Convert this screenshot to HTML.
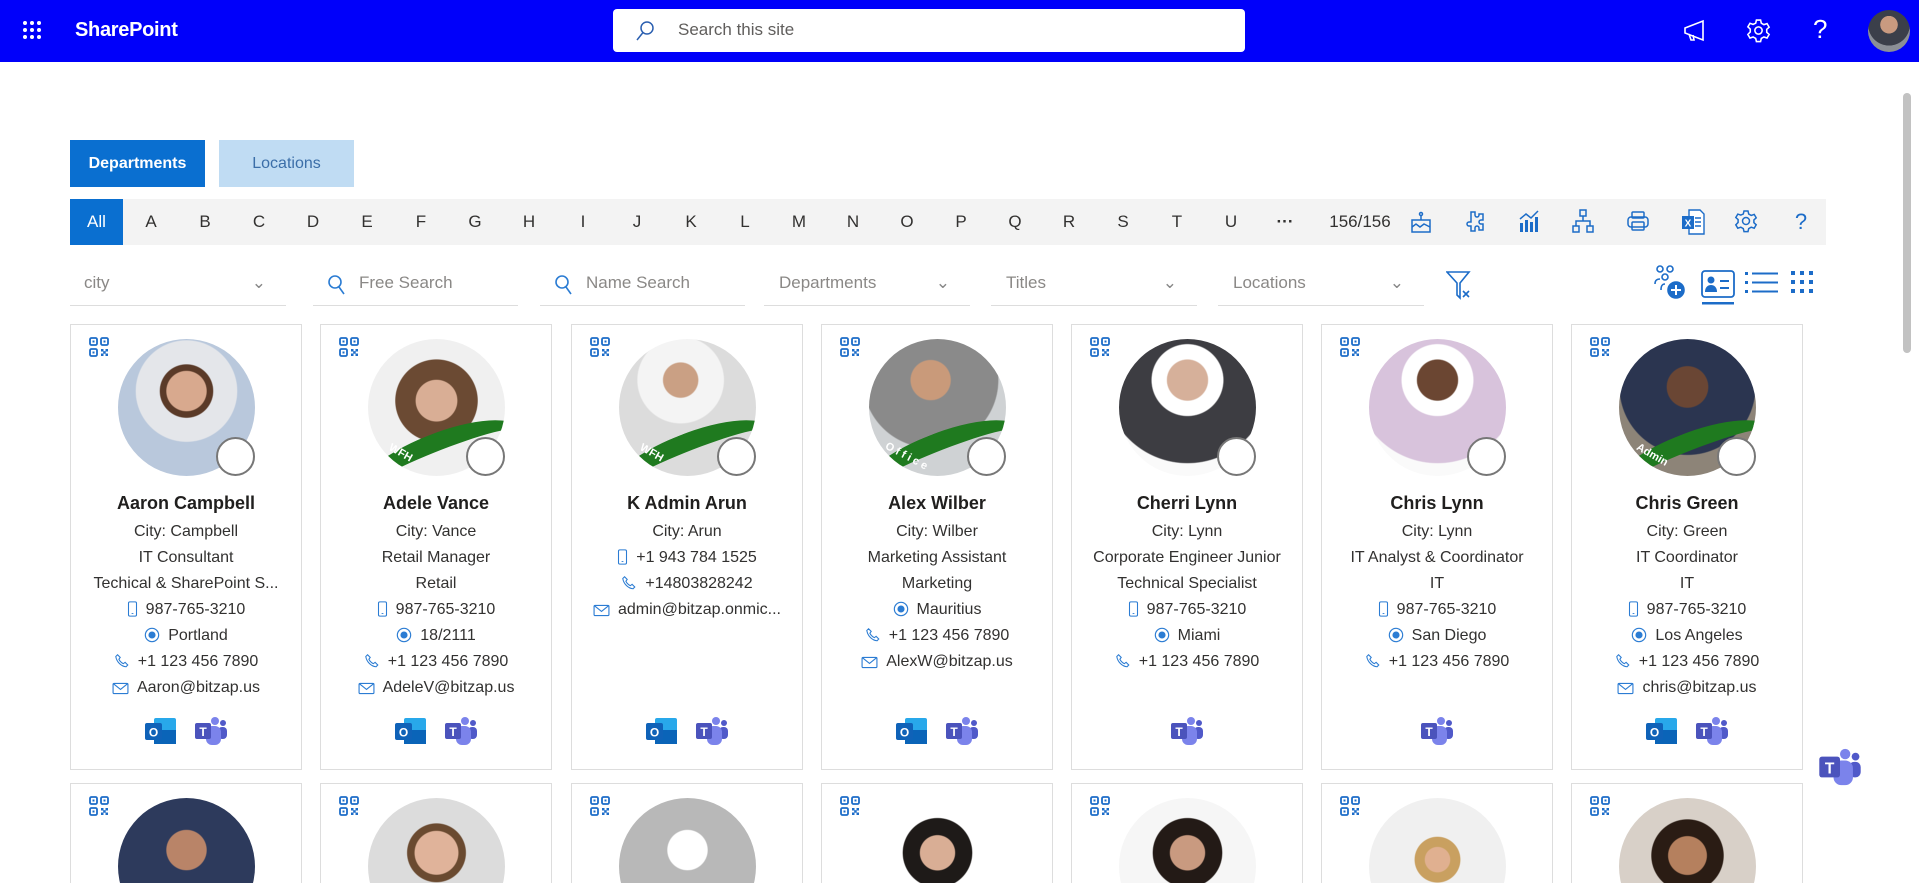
<!DOCTYPE html>
<html><head><meta charset="utf-8"><style>
*{box-sizing:border-box;margin:0;padding:0}
html{height:883px;overflow:hidden}
body{width:1919px;height:883px;overflow:hidden;background:#fff;font-family:"Liberation Sans",sans-serif;color:#323130;position:relative}
.hdr{position:absolute;left:0;top:0;width:1919px;height:62px;background:#0000fa}
.abs{position:absolute}
.search{left:613px;top:9px;width:632px;height:43px;background:#fff;border-radius:4px}
.tab{top:140px;height:47px;font-size:16px;line-height:47px;text-align:center}
.alpha{left:70px;top:199px;width:1756px;height:46px;background:#f3f3f3}
.alpha span{position:absolute;top:0;line-height:46px;font-size:17px;color:#323130;width:30px;text-align:center}
.flt{top:268px;height:38px;border-bottom:1px solid #ddd;font-size:17px;color:#8a8886;line-height:30px}
.card{position:absolute;top:324px;width:232px;height:446px;border:1px solid #ddd;text-align:center;font-size:16px}
.card.r2{top:783px;height:100px;overflow:hidden;border-bottom:none}
.ph{position:absolute;left:47px;top:14px;width:137px;height:137px;border-radius:50%;overflow:hidden;background:#e8e8e8}
.st{position:absolute;left:145px;top:112px;width:39px;height:39px;border-radius:50%;border:2.5px solid #777;background:#fff}
.qr{position:absolute;left:18px;top:12px}
.nm{position:absolute;left:0;right:0;top:166px;font-weight:bold;font-size:18px;line-height:24px;color:#201f1e}
.ln{position:absolute;left:0;right:0;top:194px}
.ln div{height:26px;line-height:26px;white-space:nowrap}
.ln svg{vertical-align:-3px;margin-right:8px}
.apps{position:absolute;left:0;right:0;top:391px;text-align:center}
.apps svg{margin:0 8px}
</style></head><body>
<svg width="0" height="0" style="position:absolute">
<defs>
<symbol id="qr" viewBox="0 0 20 20"><g fill="none" stroke="#1c6cc8" stroke-width="1.8"><rect x="1" y="1" width="7" height="7" rx="1.5"/><rect x="12" y="1" width="7" height="7" rx="1.5"/><rect x="1" y="12" width="7" height="7" rx="1.5"/></g><g fill="#1c6cc8"><rect x="3.5" y="3.5" width="2" height="2"/><rect x="14.5" y="3.5" width="2" height="2"/><rect x="3.5" y="14.5" width="2" height="2"/><rect x="12" y="12" width="2.5" height="2.5"/><rect x="16.5" y="12" width="2.5" height="2.5"/><rect x="14.2" y="14.2" width="2.5" height="2.5"/><rect x="12" y="16.5" width="2.5" height="2.5"/><rect x="16.5" y="16.5" width="2.5" height="2.5"/></g></symbol>
<symbol id="mob" viewBox="0 0 12 18"><rect x="1.5" y="1" width="9" height="16" rx="1.5" fill="none" stroke="#2b7cd3" stroke-width="1.2"/><line x1="5" y1="14" x2="7" y2="14" stroke="#2b7cd3"/></symbol>
<symbol id="loc" viewBox="0 0 18 18"><circle cx="9" cy="9" r="7.5" fill="none" stroke="#2b7cd3" stroke-width="1.3"/><circle cx="9" cy="9" r="4" fill="#2b7cd3"/></symbol>
<symbol id="tel" viewBox="0 0 18 18"><path d="M4 2l3 3-1.5 2c1 2 3 4 5 5l2-1.5 3 3-2 2C8 15 3 10 2 4z" fill="none" stroke="#2b7cd3" stroke-width="1.2"/></symbol>
<symbol id="mail" viewBox="0 0 18 14"><rect x="1" y="1.5" width="16" height="11" rx="1" fill="none" stroke="#2b7cd3" stroke-width="1.2"/><path d="M1.5 2l7.5 6 7.5-6" fill="none" stroke="#2b7cd3" stroke-width="1.2"/></symbol>
<symbol id="ol" viewBox="0 0 34 30"><rect x="10" y="2" width="22" height="26" rx="2" fill="#28a8ea"/><rect x="10" y="14" width="22" height="14" fill="#0a64b8"/><rect x="1" y="7" width="17" height="17" rx="2" fill="#0f62b8"/><text x="9.5" y="20.5" font-size="12" font-weight="bold" fill="#fff" text-anchor="middle" font-family="Liberation Sans">O</text></symbol>
<symbol id="tm" viewBox="0 0 34 30"><circle cx="21" cy="5" r="4" fill="#7b83eb"/><circle cx="29" cy="7" r="3" fill="#5059c9"/><rect x="24" y="11" width="9" height="12" rx="4" fill="#5059c9"/><rect x="12" y="10" width="15" height="19" rx="6" fill="#7b83eb"/><rect x="1" y="7" width="16" height="16" rx="2" fill="#4b53bc"/><text x="9" y="20" font-size="12" font-weight="bold" fill="#fff" text-anchor="middle" font-family="Liberation Sans">T</text></symbol>
</defs></svg>

<div class="hdr">
 <svg class="abs" style="left:22px;top:20px" width="20" height="20" viewBox="0 0 20 20" fill="#fff"><circle cx="3" cy="3" r="2"/><circle cx="10" cy="3" r="2"/><circle cx="17" cy="3" r="2"/><circle cx="3" cy="10" r="2"/><circle cx="10" cy="10" r="2"/><circle cx="17" cy="10" r="2"/><circle cx="3" cy="17" r="2"/><circle cx="10" cy="17" r="2"/><circle cx="17" cy="17" r="2"/></svg>
 <div class="abs" style="left:75px;top:19px;color:#fff;font-size:20px;font-weight:bold;letter-spacing:-0.3px">SharePoint</div>
 <div class="abs search"><svg class="abs" style="left:22px;top:11px" width="20" height="22" viewBox="0 0 20 22"><circle cx="12" cy="8" r="6" fill="none" stroke="#2b5fb0" stroke-width="1.5"/><line x1="8" y1="12.5" x2="2" y2="20" stroke="#2b5fb0" stroke-width="1.5"/></svg><div class="abs" style="left:65px;top:11px;font-size:17px;color:#605e5c">Search this site</div></div>
 <svg class="abs" style="left:1682px;top:19px" width="26" height="24" viewBox="0 0 26 24" fill="none" stroke="#fff" stroke-width="1.6"><path d="M3 9l18-7v19L3 14z"/><path d="M7 15l2 6h3l-1-5"/></svg>
 <svg class="abs" style="left:1746px;top:18px" width="25" height="25" viewBox="0 0 24 24" fill="none" stroke="#fff" stroke-width="1.5"><circle cx="12" cy="12" r="3.5"/><path d="M10 2h4l.7 3 2.5 1.4 3-1 2 3.4-2.3 2.1v2.8l2.3 2.1-2 3.4-3-1-2.5 1.4-.7 3h-4l-.7-3-2.5-1.4-3 1-2-3.4L4.1 13.4v-2.8L1.8 8.5l2-3.4 3 1L9.3 5z"/></svg>
 <div class="abs" style="left:1813px;top:14px;color:#fff;font-size:26px">?</div>
 <div class="abs" style="left:1868px;top:10px;width:42px;height:42px;border-radius:50%;background:radial-gradient(circle at 50% 35%,#c99a80 0 25%,#3b3f4a 26% 60%,#8b8f96 61%)"></div>
</div>

<div class="abs tab" style="left:70px;width:135px;background:#0a6fd0;color:#fff;font-weight:bold;font-size:16px">Departments</div>
<div class="abs tab" style="left:219px;width:135px;background:#c0dcf3;color:#3b6ea8">Locations</div>

<div class="abs alpha">
 <span style="left:0;width:53px;background:#0a6fd0;color:#fff">All</span>
 <span style="left:66px">A</span><span style="left:120px">B</span><span style="left:174px">C</span><span style="left:228px">D</span><span style="left:282px">E</span><span style="left:336px">F</span><span style="left:390px">G</span><span style="left:444px">H</span><span style="left:498px">I</span><span style="left:552px">J</span><span style="left:606px">K</span><span style="left:660px">L</span><span style="left:714px">M</span><span style="left:768px">N</span><span style="left:822px">O</span><span style="left:876px">P</span><span style="left:930px">Q</span><span style="left:984px">R</span><span style="left:1038px">S</span><span style="left:1092px">T</span><span style="left:1146px">U</span><span style="left:1200px;font-weight:bold">···</span>
 <span style="left:1250px;width:80px">156/156</span>
 <svg class="abs" style="left:1340px;top:12px" width="22" height="22" viewBox="0 0 22 22" fill="none" stroke="#1c6cc8" stroke-width="1.5"><rect x="2" y="9" width="18" height="12"/><path d="M2 16l4-3 4 3 4-3 6 3M11 9V5"/><circle cx="11" cy="3" r="1.5"/></svg>
 <svg class="abs" style="left:1394px;top:11px" width="22" height="24" viewBox="0 0 22 24" fill="none" stroke="#1c6cc8" stroke-width="1.5"><path d="M7 2h4v3a2 2 0 004 0V4h4v6h-2a2 2 0 000 4h2v6h-4v-2a2 2 0 00-4 0v3H7v-5H5a2 2 0 010-4h2z"/></svg>
 <svg class="abs" style="left:1447px;top:10px" width="24" height="24" viewBox="0 0 24 24" fill="#1c6cc8"><rect x="3" y="14" width="3" height="9"/><rect x="8" y="11" width="3" height="12"/><rect x="13" y="13" width="3" height="10"/><rect x="18" y="8" width="3" height="15"/><path d="M3 10l6-5 5 4 7-7" fill="none" stroke="#1c6cc8" stroke-width="1.5"/></svg>
 <svg class="abs" style="left:1502px;top:10px" width="22" height="24" viewBox="0 0 22 24" fill="none" stroke="#1c6cc8" stroke-width="1.5"><rect x="8" y="1" width="6" height="6"/><rect x="1" y="17" width="6" height="6"/><rect x="15" y="17" width="6" height="6"/><path d="M11 7v5M4 17v-5h14v5"/></svg>
 <svg class="abs" style="left:1556px;top:11px" width="24" height="22" viewBox="0 0 24 22" fill="none" stroke="#1c6cc8" stroke-width="1.5"><rect x="2" y="7" width="20" height="10" rx="3"/><rect x="6" y="2" width="12" height="6" rx="1"/><rect x="6" y="12" width="12" height="8" rx="1"/></svg>
 <svg class="abs" style="left:1611px;top:10px" width="24" height="26" viewBox="0 0 24 26"><path d="M8 1h11l4 4v20H8z" fill="#fff" stroke="#1c6cc8" stroke-width="1.4"/><path d="M14 9h6M14 13h6M14 17h6" stroke="#1c6cc8" stroke-width="1.4"/><rect x="1" y="7" width="12" height="13" fill="#1c6cc8"/><text x="7" y="17.5" font-size="10" fill="#fff" text-anchor="middle" font-family="Liberation Sans" font-weight="bold">X</text></svg>
 <svg class="abs" style="left:1664px;top:10px" width="24" height="24" viewBox="0 0 24 24" fill="none" stroke="#1c6cc8" stroke-width="1.5"><circle cx="12" cy="12" r="3.5"/><path d="M10 2h4l.7 3 2.5 1.4 3-1 2 3.4-2.3 2.1v2.8l2.3 2.1-2 3.4-3-1-2.5 1.4-.7 3h-4l-.7-3-2.5-1.4-3 1-2-3.4L4.1 13.4v-2.8L1.8 8.5l2-3.4 3 1L9.3 5z"/></svg>
 <span style="left:1716px;color:#1c6cc8;font-size:22px">?</span>
</div>

<div class="abs flt" style="left:70px;width:216px;padding-left:14px">city<span class="abs" style="right:20px;top:0;color:#888">&#8964;</span></div>
<div class="abs flt" style="left:313px;width:205px;padding-left:46px"><svg class="abs" style="left:14px;top:6px" width="20" height="22" viewBox="0 0 20 22" fill="none" stroke="#2b7cd3" stroke-width="1.6"><circle cx="8" cy="8" r="6"/><line x1="12" y1="13" x2="17" y2="20"/></svg>Free Search</div>
<div class="abs flt" style="left:540px;width:205px;padding-left:46px"><svg class="abs" style="left:14px;top:6px" width="20" height="22" viewBox="0 0 20 22" fill="none" stroke="#2b7cd3" stroke-width="1.6"><circle cx="8" cy="8" r="6"/><line x1="12" y1="13" x2="17" y2="20"/></svg>Name Search</div>
<div class="abs flt" style="left:764px;width:206px;padding-left:15px">Departments<span class="abs" style="right:20px;top:0;color:#888">&#8964;</span></div>
<div class="abs flt" style="left:991px;width:206px;padding-left:15px">Titles<span class="abs" style="right:20px;top:0;color:#888">&#8964;</span></div>
<div class="abs flt" style="left:1218px;width:206px;padding-left:15px">Locations<span class="abs" style="right:20px;top:0;color:#888">&#8964;</span></div>
<svg class="abs" style="left:1446px;top:270px" width="30" height="30" viewBox="0 0 30 30" fill="none" stroke="#1c6cc8" stroke-width="1.6"><path d="M1 2h22l-9 11v15l-3-3V13z"/><path d="M17 21l6 6M23 21l-6 6"/></svg>
<svg class="abs" style="left:1652px;top:264px" width="34" height="38" viewBox="0 0 34 38" fill="none" stroke="#1c6cc8" stroke-width="1.6"><circle cx="8" cy="5" r="3"/><circle cx="18" cy="5" r="3"/><circle cx="13" cy="13" r="3"/><path d="M3 20c0-4 2-5 5-5M9 26c0-4 1-6 4-6"/><circle cx="24" cy="26" r="8" fill="#1c6cc8"/><path d="M24 21v10M19 26h10" stroke="#fff" stroke-width="2"/></svg>
<svg class="abs" style="left:1700px;top:269px" width="36" height="36" viewBox="0 0 36 36"><rect x="2" y="2" width="32" height="26" rx="3" fill="none" stroke="#1c6cc8" stroke-width="1.8"/><circle cx="11" cy="11" r="3.5" fill="#1c6cc8"/><path d="M5 23c0-5 3-7 6-7s6 2 6 7z" fill="#1c6cc8"/><path d="M20 12h9M20 19h9" stroke="#1c6cc8" stroke-width="2"/><rect x="2" y="33" width="32" height="2.5" fill="#1c6cc8"/></svg>
<svg class="abs" style="left:1744px;top:270px" width="36" height="26" viewBox="0 0 36 26" fill="#1c6cc8"><rect x="1" y="2" width="3" height="3"/><rect x="1" y="11" width="3" height="3"/><rect x="1" y="20" width="3" height="3"/><rect x="8" y="2.5" width="26" height="2"/><rect x="8" y="11.5" width="26" height="2"/><rect x="8" y="20.5" width="26" height="2"/></svg>
<svg class="abs" style="left:1790px;top:270px" width="24" height="24" viewBox="0 0 24 24" fill="#1c6cc8"><rect x="1" y="1" width="4" height="4"/><rect x="10" y="1" width="4" height="4"/><rect x="19" y="1" width="4" height="4"/><rect x="1" y="10" width="4" height="4"/><rect x="10" y="10" width="4" height="4"/><rect x="19" y="10" width="4" height="4"/><rect x="1" y="19" width="4" height="4"/><rect x="10" y="19" width="4" height="4"/><rect x="19" y="19" width="4" height="4"/></svg>

<!-- Row 1 -->
<div class="card" style="left:70px">
 <svg class="qr" width="20" height="20"><use href="#qr"/></svg>
 <div class="ph" style="background:radial-gradient(circle at 50% 38%,#d8a98e 0 18%,#5a3a28 19% 24%,#e4e6ea 25% 46%,#b9c8dc 47%)"></div><div class="st"></div>
 <div class="nm">Aaron Campbell</div>
 <div class="ln"><div>City: Campbell</div><div>IT Consultant</div><div>Techical &amp; SharePoint S...</div><div><svg width="11" height="16"><use href="#mob"/></svg>987-765-3210</div><div><svg width="16" height="16"><use href="#loc"/></svg>Portland</div><div><svg width="16" height="16"><use href="#tel"/></svg>+1 123 456 7890</div><div><svg width="17" height="13"><use href="#mail"/></svg>Aaron@bitzap.us</div></div>
 <div class="apps"><svg width="34" height="30"><use href="#ol"/></svg><svg width="34" height="30"><use href="#tm"/></svg></div>
</div>
<div class="card" style="left:320px">
 <svg class="qr" width="20" height="20"><use href="#qr"/></svg>
 <div class="ph" style="background:radial-gradient(circle at 50% 45%,#d9ae95 0 20%,#6b4a33 21% 40%,#f0f0f0 41%)"><div class="abs" style="left:-20px;top:95px;width:180px;height:60px;border-top:18px solid #1f7a1f;border-radius:50%;transform:rotate(-22deg)"></div><div class="abs" style="left:20px;top:108px;color:#fff;font-size:11px;font-weight:bold;transform:rotate(30deg)">WFH</div></div><div class="st"></div>
 <div class="nm">Adele Vance</div>
 <div class="ln"><div>City: Vance</div><div>Retail Manager</div><div>Retail</div><div><svg width="11" height="16"><use href="#mob"/></svg>987-765-3210</div><div><svg width="16" height="16"><use href="#loc"/></svg>18/2111</div><div><svg width="16" height="16"><use href="#tel"/></svg>+1 123 456 7890</div><div><svg width="17" height="13"><use href="#mail"/></svg>AdeleV@bitzap.us</div></div>
 <div class="apps"><svg width="34" height="30"><use href="#ol"/></svg><svg width="34" height="30"><use href="#tm"/></svg></div>
</div>
<div class="card" style="left:571px">
 <svg class="qr" width="20" height="20"><use href="#qr"/></svg>
 <div class="ph" style="background:radial-gradient(circle at 45% 30%,#caa084 0 14%,#f4f4f4 15% 35%,#dcdcdc 36%)"><div class="abs" style="left:-20px;top:95px;width:180px;height:60px;border-top:18px solid #1f7a1f;border-radius:50%;transform:rotate(-22deg)"></div><div class="abs" style="left:20px;top:108px;color:#fff;font-size:11px;font-weight:bold;transform:rotate(30deg)">WFH</div></div><div class="st"></div>
 <div class="nm">K Admin Arun</div>
 <div class="ln"><div>City: Arun</div><div><svg width="11" height="16"><use href="#mob"/></svg>+1 943 784 1525</div><div><svg width="16" height="16"><use href="#tel"/></svg>+14803828242</div><div><svg width="17" height="13"><use href="#mail"/></svg>admin@bitzap.onmic...</div></div>
 <div class="apps"><svg width="34" height="30"><use href="#ol"/></svg><svg width="34" height="30"><use href="#tm"/></svg></div>
</div>
<div class="card" style="left:821px">
 <svg class="qr" width="20" height="20"><use href="#qr"/></svg>
 <div class="ph" style="background:radial-gradient(circle at 45% 30%,#c99a7a 0 16%,#8a8a8a 17% 55%,#cfd2d4 56%)"><div class="abs" style="left:-20px;top:95px;width:180px;height:60px;border-top:18px solid #1f7a1f;border-radius:50%;transform:rotate(-22deg)"></div><div class="abs" style="left:14px;top:112px;color:#fff;font-size:11px;font-weight:bold;letter-spacing:3px;transform:rotate(28deg)">Office</div></div><div class="st"></div>
 <div class="nm">Alex Wilber</div>
 <div class="ln"><div>City: Wilber</div><div>Marketing Assistant</div><div>Marketing</div><div><svg width="16" height="16"><use href="#loc"/></svg>Mauritius</div><div><svg width="16" height="16"><use href="#tel"/></svg>+1 123 456 7890</div><div><svg width="17" height="13"><use href="#mail"/></svg>AlexW@bitzap.us</div></div>
 <div class="apps"><svg width="34" height="30"><use href="#ol"/></svg><svg width="34" height="30"><use href="#tm"/></svg></div>
</div>
<div class="card" style="left:1071px">
 <svg class="qr" width="20" height="20"><use href="#qr"/></svg>
 <div class="ph" style="background:radial-gradient(circle at 50% 30%,#d6b09a 0 17%,#fff 18% 30%,#3d3d42 31% 70%,#fafafa 71%)"></div><div class="st"></div>
 <div class="nm">Cherri Lynn</div>
 <div class="ln"><div>City: Lynn</div><div>Corporate Engineer Junior</div><div>Technical Specialist</div><div><svg width="11" height="16"><use href="#mob"/></svg>987-765-3210</div><div><svg width="16" height="16"><use href="#loc"/></svg>Miami</div><div><svg width="16" height="16"><use href="#tel"/></svg>+1 123 456 7890</div></div>
 <div class="apps"><svg width="34" height="30"><use href="#tm"/></svg></div>
</div>
<div class="card" style="left:1321px">
 <svg class="qr" width="20" height="20"><use href="#qr"/></svg>
 <div class="ph" style="background:radial-gradient(circle at 50% 30%,#6b4632 0 17%,#fff 18% 30%,#d8c3dc 31% 70%,#fafafa 71%)"></div><div class="st"></div>
 <div class="nm">Chris Lynn</div>
 <div class="ln"><div>City: Lynn</div><div>IT Analyst &amp; Coordinator</div><div>IT</div><div><svg width="11" height="16"><use href="#mob"/></svg>987-765-3210</div><div><svg width="16" height="16"><use href="#loc"/></svg>San Diego</div><div><svg width="16" height="16"><use href="#tel"/></svg>+1 123 456 7890</div></div>
 <div class="apps"><svg width="34" height="30"><use href="#tm"/></svg></div>
</div>
<div class="card" style="left:1571px">
 <svg class="qr" width="20" height="20"><use href="#qr"/></svg>
 <div class="ph" style="background:radial-gradient(circle at 50% 35%,#6a4634 0 18%,#2b3550 19% 60%,#8d8478 61%)"><div class="abs" style="left:-20px;top:95px;width:180px;height:60px;border-top:18px solid #1f7a1f;border-radius:50%;transform:rotate(-22deg)"></div><div class="abs" style="left:16px;top:110px;color:#fff;font-size:11px;font-weight:bold;transform:rotate(30deg)">Admin</div></div><div class="st"></div>
 <div class="nm">Chris Green</div>
 <div class="ln"><div>City: Green</div><div>IT Coordinator</div><div>IT</div><div><svg width="11" height="16"><use href="#mob"/></svg>987-765-3210</div><div><svg width="16" height="16"><use href="#loc"/></svg>Los Angeles</div><div><svg width="16" height="16"><use href="#tel"/></svg>+1 123 456 7890</div><div><svg width="17" height="13"><use href="#mail"/></svg>chris@bitzap.us</div></div>
 <div class="apps"><svg width="34" height="30"><use href="#ol"/></svg><svg width="34" height="30"><use href="#tm"/></svg></div>
</div>

<!-- Row 2 -->
<div class="card r2" style="left:70px"><svg class="qr" width="20" height="20"><use href="#qr"/></svg><div class="ph" style="background:radial-gradient(circle at 50% 38%,#b98468 0 18%,#2d3a5c 19%)"></div></div>
<div class="card r2" style="left:320px"><svg class="qr" width="20" height="20"><use href="#qr"/></svg><div class="ph" style="background:radial-gradient(circle at 50% 40%,#e0b39a 0 20%,#6a4a30 21% 27%,#dcdcdc 28%)"></div></div>
<div class="card r2" style="left:571px"><svg class="qr" width="20" height="20"><use href="#qr"/></svg><div class="ph" style="background:radial-gradient(circle at 50% 38%,#fff 0 18%,#b8b8b8 19%)"></div></div>
<div class="card r2" style="left:821px"><svg class="qr" width="20" height="20"><use href="#qr"/></svg><div class="ph" style="background:radial-gradient(circle at 50% 40%,#d9ae95 0 16%,#1e1a18 17% 32%,#fff 33%)"></div></div>
<div class="card r2" style="left:1071px"><svg class="qr" width="20" height="20"><use href="#qr"/></svg><div class="ph" style="background:radial-gradient(circle at 50% 40%,#c99a80 0 16%,#231a16 17% 32%,#f6f6f6 33%)"></div></div>
<div class="card r2" style="left:1321px"><svg class="qr" width="20" height="20"><use href="#qr"/></svg><div class="ph" style="background:radial-gradient(circle at 50% 45%,#e0b090 0 12%,#c9a060 13% 22%,#f0f0f0 23%)"></div></div>
<div class="card r2" style="left:1571px"><svg class="qr" width="20" height="20"><use href="#qr"/></svg><div class="ph" style="background:radial-gradient(circle at 50% 42%,#b5805e 0 18%,#2a1c14 19% 34%,#d8d0c8 35%)"></div></div>

<svg class="abs" style="left:1818px;top:745px" width="44" height="44"><use href="#tm"/></svg>
<div class="abs" style="left:1903px;top:93px;width:8px;height:260px;border-radius:4px;background:#c2c2c2"></div>
</body></html>
